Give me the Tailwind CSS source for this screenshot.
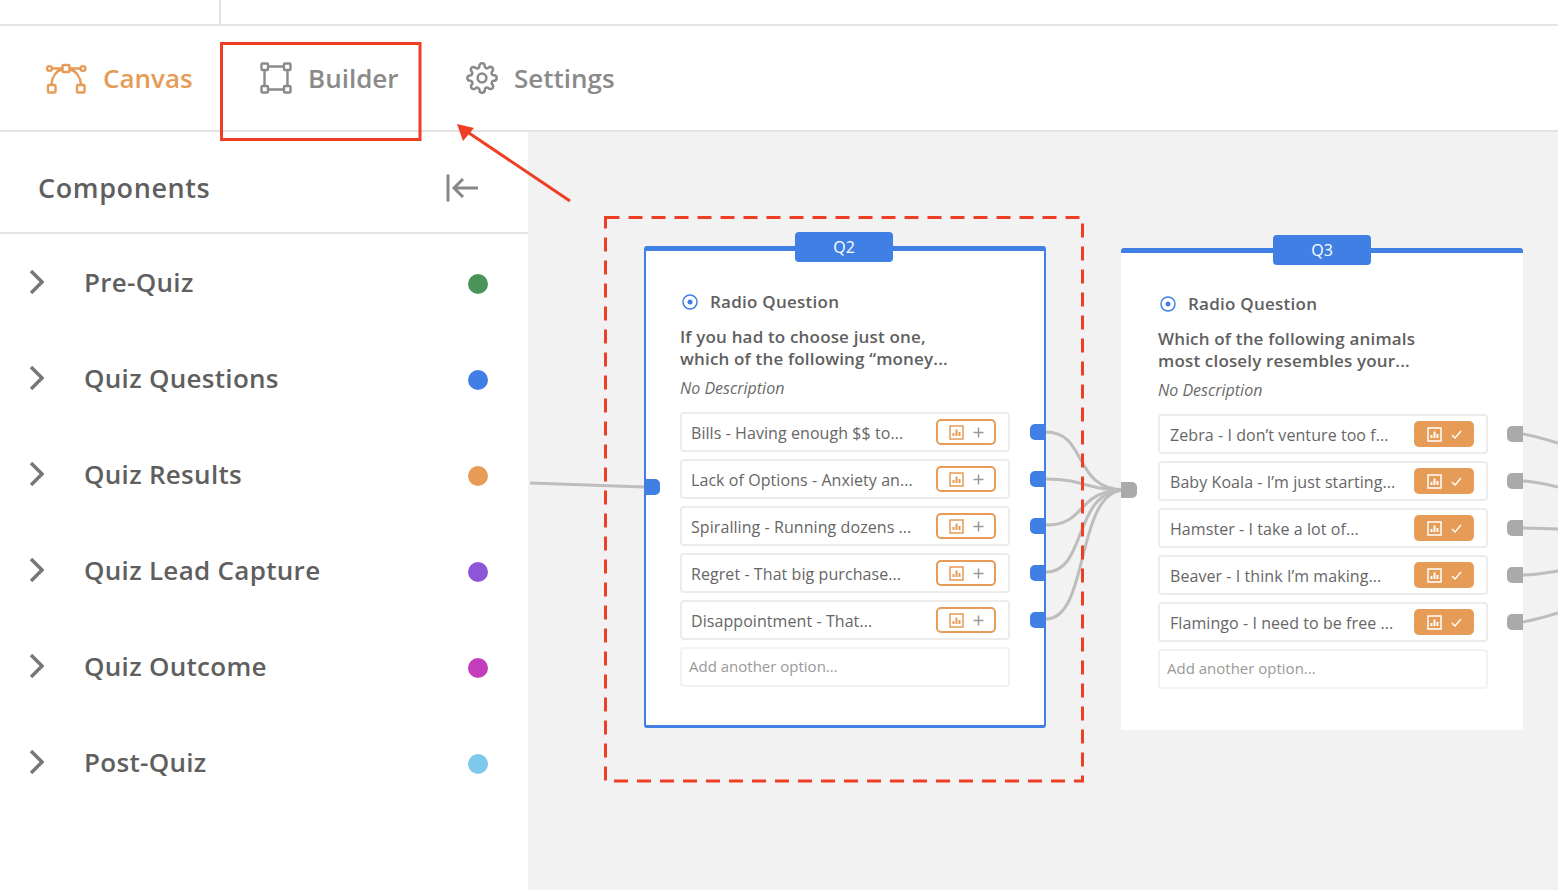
<!doctype html>
<html>
<head>
<meta charset="utf-8">
<script src="https://cdn.jsdelivr.net/npm/@tailwindcss/browser@4"></script>
</head>
<body class="overflow-hidden">
<div class="relative w-[1558px] h-[890px] flex flex-col bg-white font-['Open_Sans',sans-serif] text-[#666]">
  <div class="h-[26px] shrink-0 border-b-2 border-[#e4e4e4] flex">
    <div class="w-[221px] border-r-2 border-[#e4e4e4]"></div>
  </div>
  <nav class="h-[106px] shrink-0 border-b-2 border-[#e2e2e2] flex items-start pt-[34px]">
    <div class="flex items-center gap-[16px] pl-[46px] w-[220px] text-[#e69b57] text-[26px] leading-[36px] font-semibold">
      <svg class="w-[41px] h-[31px] shrink-0" viewBox="0 0 41 31" fill="none" stroke="currentColor" stroke-width="2.4"><rect x="16.5" y="2" width="7" height="7" rx="1"/><circle cx="3.5" cy="5.5" r="2.4"/><circle cx="37" cy="5.5" r="2.4"/><path d="M6 5.5h10.5M23.5 5.5H34.500M16.500 6C10 8 6 14 5.500 21M23.500 6C30 8 34.500 14 35 21"/><rect x="2" y="22" width="7.500" height="7.500" rx="1"/><rect x="31" y="22" width="7.500" height="7.500" rx="1"/></svg>
      <span>Canvas</span>
    </div>
    <div class="flex items-center gap-[16px] pl-[40px] w-[246px] text-[#8a8a8a] text-[26px] leading-[36px] font-semibold">
      <svg class="w-[32px] h-[32px] shrink-0" viewBox="0 0 32 32" fill="none" stroke="currentColor" stroke-width="2.400"><rect x="1.500" y="1.500" width="6.500" height="6.500" rx="1"/><rect x="24" y="1.500" width="6.500" height="6.500" rx="1"/><rect x="1.500" y="24" width="6.500" height="6.500" rx="1"/><rect x="24" y="24" width="6.500" height="6.500" rx="1"/><path d="M8 4.500h16M8 27.500h16M4.500 8v16M27.500 8v16"/></svg>
      <span>Builder</span>
    </div>
    <div class="flex items-center gap-[16px] text-[#8a8a8a] text-[26px] leading-[36px] font-semibold">
      <svg class="w-[32px] h-[32px] shrink-0" viewBox="0 0 24 24" fill="none" stroke="currentColor" stroke-width="1.900" stroke-linejoin="round"><circle cx="12" cy="12" r="3.300"/><path d="M19.4 15a1.65 1.65 0 0 0 .33 1.82l.06.06a2 2 0 0 1 0 2.83 2 2 0 0 1-2.83 0l-.06-.06a1.65 1.65 0 0 0-1.82-.33 1.65 1.65 0 0 0-1 1.51V21a2 2 0 0 1-2 2 2 2 0 0 1-2-2v-.09A1.65 1.65 0 0 0 9 19.4a1.65 1.65 0 0 0-1.82.33l-.06.06a2 2 0 0 1-2.83 0 2 2 0 0 1 0-2.83l.06-.06a1.65 1.65 0 0 0 .33-1.82 1.65 1.65 0 0 0-1.51-1H3a2 2 0 0 1-2-2 2 2 0 0 1 2-2h.09A1.65 1.65 0 0 0 4.600 9a1.65 1.65 0 0 0-.33-1.82l-.06-.06a2 2 0 0 1 0-2.83 2 2 0 0 1 2.83 0l.06.06a1.65 1.65 0 0 0 1.82.33H9a1.65 1.65 0 0 0 1-1.51V3a2 2 0 0 1 2-2 2 2 0 0 1 2 2v.09a1.65 1.65 0 0 0 1 1.51 1.65 1.65 0 0 0 1.82-.33l.06-.06a2 2 0 0 1 2.83 0 2 2 0 0 1 0 2.83l-.06.06a1.65 1.65 0 0 0-.33 1.82V9a1.65 1.65 0 0 0 1.51 1H21a2 2 0 0 1 2 2 2 2 0 0 1-2 2h-.09a1.65 1.65 0 0 0-1.51 1z"/></svg>
      <span>Settings</span>
    </div>
  </nav>
  <main class="flex-1 flex min-h-0">
    <aside class="w-[528px] shrink-0 bg-white flex flex-col">
      <div class="h-[102px] shrink-0 border-b-2 border-[#e4e4e4] flex items-center justify-between pt-[12px] pl-[38px] pr-[49px]">
        <span class="text-[27px] font-semibold tracking-[0.6px] text-[#5f5f5f]">Components</span>
        <svg class="w-[33px] h-[30px]" viewBox="0 0 33 30" fill="none" stroke="#888" stroke-width="3"><path d="M2 1.500v27M32 15H9M17 6l-9 9 9 9"/></svg>
      </div>
      <div class="h-[96px] flex items-center pl-[29px] pr-[40px] text-[26px] font-semibold tracking-[0.3px] text-[#5f5f5f]">
        <svg class="w-[15px] h-[24px] shrink-0" viewBox="0 0 15 24" fill="none" stroke="#777" stroke-width="3.500"><path d="M2 1l11 11L2 23"/></svg>
        <span class="ml-[40px] flex-1">Pre-Quiz</span><span class="size-5 mt-[4px] rounded-full bg-[#4a9359]"></span>
      </div>
      <div class="h-[96px] flex items-center pl-[29px] pr-[40px] text-[26px] font-semibold tracking-[0.3px] text-[#5f5f5f]">
        <svg class="w-[15px] h-[24px] shrink-0" viewBox="0 0 15 24" fill="none" stroke="#777" stroke-width="3.500"><path d="M2 1l11 11L2 23"/></svg>
        <span class="ml-[40px] flex-1">Quiz Questions</span><span class="size-5 mt-[4px] rounded-full bg-[#4080e5]"></span>
      </div>
      <div class="h-[96px] flex items-center pl-[29px] pr-[40px] text-[26px] font-semibold tracking-[0.3px] text-[#5f5f5f]">
        <svg class="w-[15px] h-[24px] shrink-0" viewBox="0 0 15 24" fill="none" stroke="#777" stroke-width="3.500"><path d="M2 1l11 11L2 23"/></svg>
        <span class="ml-[40px] flex-1">Quiz Results</span><span class="size-5 mt-[4px] rounded-full bg-[#e69b57]"></span>
      </div>
      <div class="h-[96px] flex items-center pl-[29px] pr-[40px] text-[26px] font-semibold tracking-[0.3px] text-[#5f5f5f]">
        <svg class="w-[15px] h-[24px] shrink-0" viewBox="0 0 15 24" fill="none" stroke="#777" stroke-width="3.500"><path d="M2 1l11 11L2 23"/></svg>
        <span class="ml-[40px] flex-1">Quiz Lead Capture</span><span class="size-5 mt-[4px] rounded-full bg-[#8d55d8]"></span>
      </div>
      <div class="h-[96px] flex items-center pl-[29px] pr-[40px] text-[26px] font-semibold tracking-[0.3px] text-[#5f5f5f]">
        <svg class="w-[15px] h-[24px] shrink-0" viewBox="0 0 15 24" fill="none" stroke="#777" stroke-width="3.500"><path d="M2 1l11 11L2 23"/></svg>
        <span class="ml-[40px] flex-1">Quiz Outcome</span><span class="size-5 mt-[4px] rounded-full bg-[#c43dbd]"></span>
      </div>
      <div class="h-[96px] flex items-center pl-[29px] pr-[40px] text-[26px] font-semibold tracking-[0.3px] text-[#5f5f5f]">
        <svg class="w-[15px] h-[24px] shrink-0" viewBox="0 0 15 24" fill="none" stroke="#777" stroke-width="3.500"><path d="M2 1l11 11L2 23"/></svg>
        <span class="ml-[40px] flex-1">Post-Quiz</span><span class="size-5 mt-[4px] rounded-full bg-[#7cc9ec]"></span>
      </div>
    </aside>
    <section class="relative flex-1 bg-[#f2f2f2] overflow-hidden">
      <svg class="absolute left-0 top-0 w-[1030px] h-[758px]" viewBox="528 132 1030 758" fill="none" stroke="#bdbdbd" stroke-width="3">
        <path d="M530 483L644 487"/>
        <path d="M1046 432C1088 432 1072 490 1125 490"/>
        <path d="M1046 479C1085 479 1085 490 1125 490"/>
        <path d="M1046 525C1088 525 1075 490 1125 490"/>
        <path d="M1046 572C1088 572 1072 490 1125 490"/>
        <path d="M1046 619C1090 619 1075 490 1125 490"/>
        <path d="M1523 434C1535 436 1545 439 1558 443"/>
        <path d="M1523 481C1535 482 1545 484 1558 487"/>
        <path d="M1523 528L1558 529"/>
        <path d="M1523 575C1535 575 1545 573 1558 571"/>
        <path d="M1523 622C1535 620 1545 617 1558 613"/>
      </svg>

      <!-- Q2 -->
      <article class="absolute left-[116px] top-[114px] w-[402px] h-[482px] bg-white border-2 border-b-3 border-t-[5px] border-[#4080e5] rounded-[3px] pl-[34px] pt-[39px] flex flex-col">
        <div class="absolute left-[149px] -top-[19px] w-[98px] h-[30px] rounded-[4px] bg-[#4080e5] text-white text-[16px] flex items-center justify-center">Q2</div>
        <div class="flex items-center h-[24px] text-[17px] font-semibold tracking-[0.25px] text-[#5f5f5f]">
          <svg class="ml-[2px] w-[16px] h-[16px] shrink-0" viewBox="0 0 16 16"><circle cx="8" cy="8" r="7" fill="none" stroke="#4080e5" stroke-width="1.500"/><circle cx="8" cy="8" r="2.500" fill="#4080e5"/></svg>
          <span class="ml-[12px]">Radio Question</span>
        </div>
        <p class="mt-[12px] text-[17px] leading-[22px] font-semibold tracking-[0.17px] text-[#5f5f5f]">If you had to choose just one,<br>which of the following “money...</p>
        <p class="mt-[7px] text-[16px] leading-[22px] italic text-[#6a6a6a]">No Description</p>
        <ul class="mt-[13px] w-[330px] flex flex-col gap-[7px]">
          <li class="h-[40px] border-2 border-[#ececec] rounded-[4px] pl-[9px] pr-[12px] flex items-center justify-between text-[16px] tracking-[0.07px]"><span class="pt-[2px]">Bills - Having enough $$ to...</span><span class="w-[60px] h-[26px] rounded-[5px] border-2 border-[#e69b57] bg-white flex items-center justify-center gap-[9px] text-[#e69b57]"><svg class="w-[15px] h-[15px]" viewBox="0 0 15 15" fill="none" stroke="currentColor" stroke-width="1.500"><rect x="1" y="1" width="13" height="13"/><path stroke-width="2" d="M4.500 11V8M7.500 11V4.500M10.500 11V7"/></svg><svg class="w-[11px] h-[11px]" viewBox="0 0 11 11" fill="none" stroke="#999" stroke-width="1.500"><path d="M5.500 .5v10M.5 5.500h10"/></svg></span></li>
          <li class="h-[40px] border-2 border-[#ececec] rounded-[4px] pl-[9px] pr-[12px] flex items-center justify-between text-[16px] tracking-[0.07px]"><span class="pt-[2px]">Lack of Options - Anxiety an...</span><span class="w-[60px] h-[26px] rounded-[5px] border-2 border-[#e69b57] bg-white flex items-center justify-center gap-[9px] text-[#e69b57]"><svg class="w-[15px] h-[15px]" viewBox="0 0 15 15" fill="none" stroke="currentColor" stroke-width="1.500"><rect x="1" y="1" width="13" height="13"/><path stroke-width="2" d="M4.500 11V8M7.500 11V4.500M10.500 11V7"/></svg><svg class="w-[11px] h-[11px]" viewBox="0 0 11 11" fill="none" stroke="#999" stroke-width="1.500"><path d="M5.500 .5v10M.5 5.500h10"/></svg></span></li>
          <li class="h-[40px] border-2 border-[#ececec] rounded-[4px] pl-[9px] pr-[12px] flex items-center justify-between text-[16px] tracking-[0.07px]"><span class="pt-[2px]">Spiralling - Running dozens ...</span><span class="w-[60px] h-[26px] rounded-[5px] border-2 border-[#e69b57] bg-white flex items-center justify-center gap-[9px] text-[#e69b57]"><svg class="w-[15px] h-[15px]" viewBox="0 0 15 15" fill="none" stroke="currentColor" stroke-width="1.500"><rect x="1" y="1" width="13" height="13"/><path stroke-width="2" d="M4.500 11V8M7.500 11V4.500M10.500 11V7"/></svg><svg class="w-[11px] h-[11px]" viewBox="0 0 11 11" fill="none" stroke="#999" stroke-width="1.500"><path d="M5.500 .5v10M.5 5.500h10"/></svg></span></li>
          <li class="h-[40px] border-2 border-[#ececec] rounded-[4px] pl-[9px] pr-[12px] flex items-center justify-between text-[16px] tracking-[0.07px]"><span class="pt-[2px]">Regret - That big purchase...</span><span class="w-[60px] h-[26px] rounded-[5px] border-2 border-[#e69b57] bg-white flex items-center justify-center gap-[9px] text-[#e69b57]"><svg class="w-[15px] h-[15px]" viewBox="0 0 15 15" fill="none" stroke="currentColor" stroke-width="1.500"><rect x="1" y="1" width="13" height="13"/><path stroke-width="2" d="M4.500 11V8M7.500 11V4.500M10.500 11V7"/></svg><svg class="w-[11px] h-[11px]" viewBox="0 0 11 11" fill="none" stroke="#999" stroke-width="1.500"><path d="M5.500 .5v10M.5 5.500h10"/></svg></span></li>
          <li class="h-[40px] border-2 border-[#ececec] rounded-[4px] pl-[9px] pr-[12px] flex items-center justify-between text-[16px] tracking-[0.07px]"><span class="pt-[2px]">Disappointment - That...</span><span class="w-[60px] h-[26px] rounded-[5px] border-2 border-[#e69b57] bg-white flex items-center justify-center gap-[9px] text-[#e69b57]"><svg class="w-[15px] h-[15px]" viewBox="0 0 15 15" fill="none" stroke="currentColor" stroke-width="1.500"><rect x="1" y="1" width="13" height="13"/><path stroke-width="2" d="M4.500 11V8M7.500 11V4.500M10.500 11V7"/></svg><svg class="w-[11px] h-[11px]" viewBox="0 0 11 11" fill="none" stroke="#999" stroke-width="1.500"><path d="M5.500 .5v10M.5 5.500h10"/></svg></span></li>
          <li class="h-[40px] border-2 border-[#f2f2f2] rounded-[4px] pl-[7px] pb-[2px] flex items-center text-[15px] text-[#999]">Add another option...</li>
        </ul>
        <span class="absolute -left-[2px] top-[228px] w-[16px] h-[16px] bg-[#4080e5] rounded-r-[5px]"></span>
        <span class="absolute -right-[2px] top-[173px] w-[16px] h-[16px] bg-[#4080e5] rounded-l-[5px]"></span>
        <span class="absolute -right-[2px] top-[220px] w-[16px] h-[16px] bg-[#4080e5] rounded-l-[5px]"></span>
        <span class="absolute -right-[2px] top-[267px] w-[16px] h-[16px] bg-[#4080e5] rounded-l-[5px]"></span>
        <span class="absolute -right-[2px] top-[314px] w-[16px] h-[16px] bg-[#4080e5] rounded-l-[5px]"></span>
        <span class="absolute -right-[2px] top-[361px] w-[16px] h-[16px] bg-[#4080e5] rounded-l-[5px]"></span>
      </article>

      <!-- Q3 -->
      <article class="absolute left-[593px] top-[116px] w-[402px] h-[482px] bg-white border-t-[5px] border-[#4080e5] rounded-t-[3px] pl-[37px] pt-[39px] flex flex-col">
        <div class="absolute left-[152px] -top-[18px] w-[98px] h-[30px] rounded-[4px] bg-[#4080e5] text-white text-[16px] flex items-center justify-center">Q3</div>
        <div class="flex items-center h-[24px] text-[17px] font-semibold tracking-[0.25px] text-[#5f5f5f]">
          <svg class="ml-[2px] w-[16px] h-[16px] shrink-0" viewBox="0 0 16 16"><circle cx="8" cy="8" r="7" fill="none" stroke="#4080e5" stroke-width="1.500"/><circle cx="8" cy="8" r="2.500" fill="#4080e5"/></svg>
          <span class="ml-[12px]">Radio Question</span>
        </div>
        <p class="mt-[12px] text-[17px] leading-[22px] font-semibold tracking-[0.17px] text-[#5f5f5f]">Which of the following animals<br>most closely resembles your...</p>
        <p class="mt-[7px] text-[16px] leading-[22px] italic text-[#6a6a6a]">No Description</p>
        <ul class="mt-[13px] w-[330px] flex flex-col gap-[7px]">
          <li class="h-[40px] border-2 border-[#ececec] rounded-[4px] pl-[10px] pr-[12px] flex items-center justify-between text-[16px] tracking-[0.07px]"><span class="pt-[2px]">Zebra - I don’t venture too f...</span><span class="w-[60px] h-[26px] rounded-[5px] bg-[#e69b57] flex items-center justify-center gap-[9px] text-white"><svg class="w-[15px] h-[15px]" viewBox="0 0 15 15" fill="none" stroke="currentColor" stroke-width="1.500"><rect x="1" y="1" width="13" height="13"/><path stroke-width="2" d="M4.500 11V8M7.500 11V4.500M10.500 11V7"/></svg><svg class="w-[11px] h-[9px]" viewBox="0 0 11 9" fill="none" stroke="currentColor" stroke-width="1.400"><path d="M1 5l3 3 6-7"/></svg></span></li>
          <li class="h-[40px] border-2 border-[#ececec] rounded-[4px] pl-[10px] pr-[12px] flex items-center justify-between text-[16px] tracking-[0.07px]"><span class="pt-[2px]">Baby Koala - I’m just starting...</span><span class="w-[60px] h-[26px] rounded-[5px] bg-[#e69b57] flex items-center justify-center gap-[9px] text-white"><svg class="w-[15px] h-[15px]" viewBox="0 0 15 15" fill="none" stroke="currentColor" stroke-width="1.500"><rect x="1" y="1" width="13" height="13"/><path stroke-width="2" d="M4.500 11V8M7.500 11V4.500M10.500 11V7"/></svg><svg class="w-[11px] h-[9px]" viewBox="0 0 11 9" fill="none" stroke="currentColor" stroke-width="1.400"><path d="M1 5l3 3 6-7"/></svg></span></li>
          <li class="h-[40px] border-2 border-[#ececec] rounded-[4px] pl-[10px] pr-[12px] flex items-center justify-between text-[16px] tracking-[0.07px]"><span class="pt-[2px]">Hamster - I take a lot of...</span><span class="w-[60px] h-[26px] rounded-[5px] bg-[#e69b57] flex items-center justify-center gap-[9px] text-white"><svg class="w-[15px] h-[15px]" viewBox="0 0 15 15" fill="none" stroke="currentColor" stroke-width="1.500"><rect x="1" y="1" width="13" height="13"/><path stroke-width="2" d="M4.500 11V8M7.500 11V4.500M10.500 11V7"/></svg><svg class="w-[11px] h-[9px]" viewBox="0 0 11 9" fill="none" stroke="currentColor" stroke-width="1.400"><path d="M1 5l3 3 6-7"/></svg></span></li>
          <li class="h-[40px] border-2 border-[#ececec] rounded-[4px] pl-[10px] pr-[12px] flex items-center justify-between text-[16px] tracking-[0.07px]"><span class="pt-[2px]">Beaver - I think I’m making...</span><span class="w-[60px] h-[26px] rounded-[5px] bg-[#e69b57] flex items-center justify-center gap-[9px] text-white"><svg class="w-[15px] h-[15px]" viewBox="0 0 15 15" fill="none" stroke="currentColor" stroke-width="1.500"><rect x="1" y="1" width="13" height="13"/><path stroke-width="2" d="M4.500 11V8M7.500 11V4.500M10.500 11V7"/></svg><svg class="w-[11px] h-[9px]" viewBox="0 0 11 9" fill="none" stroke="currentColor" stroke-width="1.400"><path d="M1 5l3 3 6-7"/></svg></span></li>
          <li class="h-[40px] border-2 border-[#ececec] rounded-[4px] pl-[10px] pr-[12px] flex items-center justify-between text-[16px] tracking-[0.07px]"><span class="pt-[2px]">Flamingo - I need to be free ...</span><span class="w-[60px] h-[26px] rounded-[5px] bg-[#e69b57] flex items-center justify-center gap-[9px] text-white"><svg class="w-[15px] h-[15px]" viewBox="0 0 15 15" fill="none" stroke="currentColor" stroke-width="1.500"><rect x="1" y="1" width="13" height="13"/><path stroke-width="2" d="M4.500 11V8M7.500 11V4.500M10.500 11V7"/></svg><svg class="w-[11px] h-[9px]" viewBox="0 0 11 9" fill="none" stroke="currentColor" stroke-width="1.400"><path d="M1 5l3 3 6-7"/></svg></span></li>
          <li class="h-[40px] border-2 border-[#f2f2f2] rounded-[4px] pl-[7px] pb-[2px] flex items-center text-[15px] text-[#999]">Add another option...</li>
        </ul>
        <span class="absolute left-0 top-[229px] w-[16px] h-[16px] bg-[#aaa] rounded-r-[5px]"></span>
        <span class="absolute right-0 top-[173px] w-[16px] h-[16px] bg-[#aaa] rounded-l-[5px]"></span>
        <span class="absolute right-0 top-[220px] w-[16px] h-[16px] bg-[#aaa] rounded-l-[5px]"></span>
        <span class="absolute right-0 top-[267px] w-[16px] h-[16px] bg-[#aaa] rounded-l-[5px]"></span>
        <span class="absolute right-0 top-[314px] w-[16px] h-[16px] bg-[#aaa] rounded-l-[5px]"></span>
        <span class="absolute right-0 top-[361px] w-[16px] h-[16px] bg-[#aaa] rounded-l-[5px]"></span>
      </article>
    </section>
  </main>

  <!-- annotations -->
  <svg class="absolute inset-0 w-[1558px] h-[890px] pointer-events-none" viewBox="0 0 1558 890" fill="none">
    <rect x="221.500" y="43.500" width="198.500" height="96" stroke="#ee3f24" stroke-width="3"/>
    <path d="M570 201L466 131" stroke="#ee3f24" stroke-width="3"/>
    <path d="M457 124L474 128L463 141Z" fill="#ee3f24"/>
    <rect x="605.500" y="217.500" width="477" height="563.500" stroke="#ee3f24" stroke-width="3" stroke-dasharray="14 9"/>
  </svg>
</div>
</body>
</html>
